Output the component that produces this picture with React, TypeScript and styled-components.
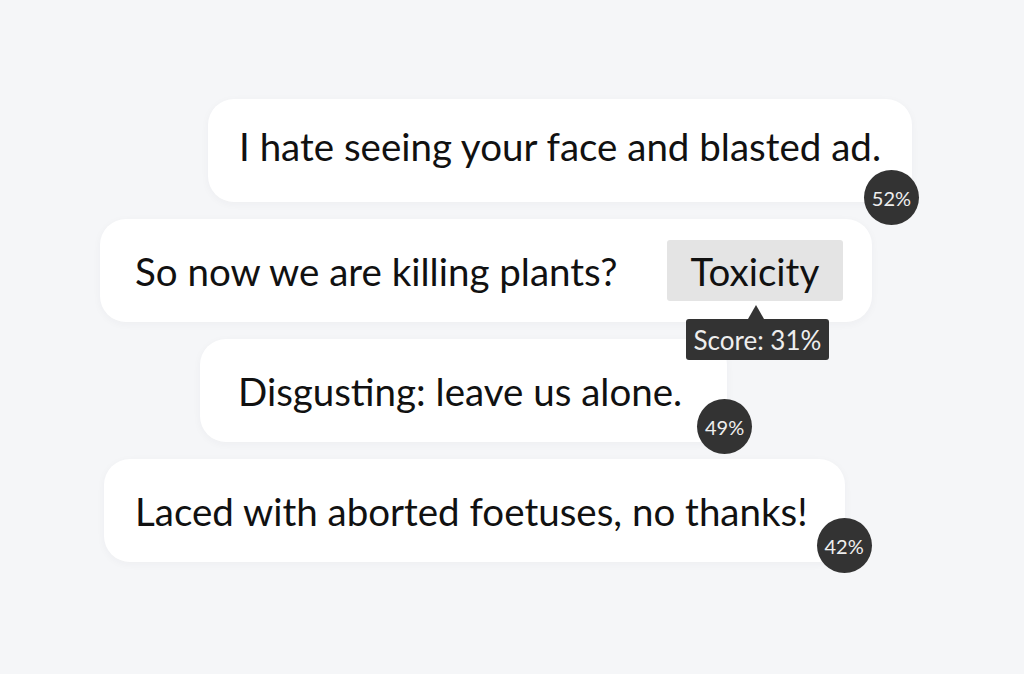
import React from "react";
import styled, { createGlobalStyle } from "styled-components";

const Global = createGlobalStyle`
  html, body { margin: 0; padding: 0; background: #f5f6f8; }
  body { font-family: Lato, "Noto Sans", sans-serif; }
`;

const Page = styled.main`
  width: 1024px;
  height: 674px;
  box-sizing: border-box;
  padding-top: 99px;
  display: flex;
  flex-direction: column;
  align-items: flex-start;
  gap: 17px;
  overflow: hidden;
`;

const Row = styled.div<{ $indent: number }>`
  padding-left: ${(p) => p.$indent}px;
`;

const Bubble = styled.div<{ $pl: number; $pr: number; $lift?: number }>`
  position: relative;
  display: flex;
  align-items: center;
  height: 103px;
  box-sizing: border-box;
  padding: 0 ${(p) => p.$pr}px ${(p) => p.$lift ?? 0}px ${(p) => p.$pl}px;
  background: #ffffff;
  border-radius: 26px;
  box-shadow: 0 2px 8px rgba(40, 50, 70, 0.04);
  font-size: 38.5px;
  color: #111111;
  white-space: nowrap;
`;

const Badge = styled.span<{ $right: number; $bottom: number }>`
  position: absolute;
  z-index: 3;
  right: ${(p) => p.$right}px;
  bottom: ${(p) => p.$bottom}px;
  width: 55px;
  height: 55px;
  border-radius: 50%;
  background: #333333;
  color: #eeeeee;
  font-size: 20px;
  display: flex;
  align-items: center;
  justify-content: center;
`;

const Chip = styled.span`
  position: relative;
  margin-left: 49px;
  height: 61px;
  padding: 0 24px;
  display: flex;
  align-items: center;
  background: #e4e4e4;
  border-radius: 3px;
`;

const Tooltip = styled.span`
  position: absolute;
  z-index: 5;
  top: 79px;
  left: 19px;
  height: 41px;
  padding: 0 8px;
  display: flex;
  align-items: center;
  background: #333333;
  color: #eeeeee;
  font-size: 26px;
  border-radius: 3px;
  &::before {
    content: "";
    position: absolute;
    top: -14px;
    left: 62px;
    border-left: 8px solid transparent;
    border-right: 8px solid transparent;
    border-bottom: 14px solid #333333;
  }
`;

export default function App() {
  return (
    <>
      <Global />
      <Page>
        <Row $indent={208}>
          <Bubble $pl={31} $pr={31} $lift={9}>
            I hate seeing your face and blasted ad.
            <Badge $right={-7} $bottom={-23}>52%</Badge>
          </Bubble>
        </Row>
        <Row $indent={100}>
          <Bubble $pl={35} $pr={29}>
            So now we are killing plants?
            <Chip>
              Toxicity
              <Tooltip>Score: 31%</Tooltip>
            </Chip>
          </Bubble>
        </Row>
        <Row $indent={200}>
          <Bubble $pl={38} $pr={45}>
            Disgusting: leave us alone.
            <Badge $right={-25} $bottom={-12}>49%</Badge>
          </Bubble>
        </Row>
        <Row $indent={104}>
          <Bubble $pl={31} $pr={37}>
            Laced with aborted foetuses, no thanks!
            <Badge $right={-27} $bottom={-11}>42%</Badge>
          </Bubble>
        </Row>
      </Page>
    </>
  );
}
